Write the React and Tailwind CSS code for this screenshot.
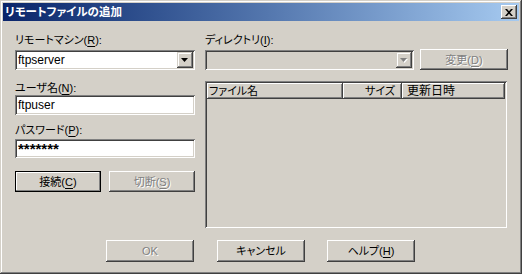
import React from "react";

const Arrow = ({ disabled }) => (
  <svg width="8" height="5" viewBox="0 0 8 5" className="block">
    {disabled && <polygon points="1,1 8,1 4.5,5" fill="#ffffff" />}
    <polygon points="0,0 7,0 3.5,4" fill={disabled ? "#808080" : "#000000"} />
  </svg>
);

const Combo = ({ value, disabled, className }) => (
  <div
    className={
      "h-[20px] flex items-stretch p-[2px] shadow-[inset_1px_1px_#808080,inset_-1px_-1px_#ffffff,inset_2px_2px_#404040,inset_-2px_-2px_#d4d0c8] " +
      (disabled ? "bg-[#d4d0c8] " : "bg-white ") +
      (className || "")
    }
  >
    <div className="flex-1 flex items-center pl-[1px] leading-[14px] text-[12px]">{value}</div>
    <div className="w-[16px] flex items-center justify-center bg-[#d4d0c8] shadow-[inset_-1px_-1px_#404040,inset_1px_1px_#d4d0c8,inset_-2px_-2px_#808080,inset_2px_2px_#ffffff]">
      <Arrow disabled={disabled} />
    </div>
  </div>
);

const Input = ({ value, className }) => (
  <div
    className={
      "bg-white flex items-center px-[3px] leading-[14px] shadow-[inset_1px_1px_#808080,inset_-1px_-1px_#ffffff,inset_2px_2px_#404040,inset_-2px_-2px_#d4d0c8] " +
      (className || "")
    }
  >
    {value}
  </div>
);

const Btn = ({ children, disabled, def, className }) => (
  <div
    className={
      "flex items-center justify-center leading-[14px] " +
      (def
        ? "shadow-[inset_0_0_0_1px_#000000,inset_-2px_-2px_#808080,inset_2px_2px_#ffffff] "
        : "shadow-[inset_-1px_-1px_#404040,inset_1px_1px_#ffffff,inset_-2px_-2px_#808080,inset_2px_2px_#d4d0c8] ") +
      (disabled ? "text-[#808080] [text-shadow:1px_1px_#ffffff] " : "text-black ") +
      (className || "")
    }
  >
    {children}
  </div>
);

const U = ({ children }) => <span className="underline underline-offset-[2px]">{children}</span>;

const HeaderCell = ({ children, className }) => (
  <div
    className={
      "h-full flex items-center leading-[14px] shadow-[inset_-1px_-1px_#404040,inset_1px_1px_#ffffff,inset_-2px_-2px_#808080] " +
      (className || "")
    }
  >
    {children}
  </div>
);

export default function App() {
  return (
    <div className="w-[522px] h-[274px] bg-[#d4d0c8] p-[3px] flex flex-col text-[11px] text-black font-['Liberation_Sans','Noto_Sans_CJK_JP',sans-serif] [font-feature-settings:'palt'] shadow-[inset_-1px_-1px_#404040,inset_1px_1px_#d4d0c8,inset_-2px_-2px_#808080,inset_2px_2px_#ffffff]">
      <div className="h-[18px] shrink-0 flex items-center pl-[2px] pr-[2px] bg-linear-to-r from-[#0a246a] to-[#a6caf0]">
        <span className="text-white font-bold text-[11.5px] leading-[14px]">リモートファイルの追加</span>
        <div className="ml-auto w-[16px] h-[14px] bg-[#d4d0c8] flex items-center justify-center shadow-[inset_-1px_-1px_#404040,inset_1px_1px_#ffffff,inset_-2px_-2px_#808080,inset_2px_2px_#d4d0c8]">
          <svg width="8" height="7" viewBox="0 0 8 7" className="block">
            <path d="M0 0h2l2 2.2L6 0h2L5 3.5 8 7H6L4 4.8 2 7H0l3-3.5z" fill="#000000" />
          </svg>
        </div>
      </div>

      <div className="flex flex-col px-[12px] pt-[12px]">
        <div className="flex gap-[10px]">
          <div className="w-[180px] flex flex-col">
            <div className="h-[17px] leading-[14px]">リモートマシン(<U>R</U>):</div>
            <Combo value="ftpserver" />
            <div className="h-[14px] mt-[11px] leading-[14px]">ユーザ名(<U>N</U>):</div>
            <Input value="ftpuser" className="h-[20px] text-[12px]" />
            <div className="h-[16px] mt-[8px] leading-[14px]">パスワード(<U>P</U>):</div>
            <Input value="*******" className="h-[19px] font-bold text-[15px]" />
            <div className="flex gap-[8px] mt-[13px]">
              <Btn def className="w-[87px] h-[21px]">
                接続(<U>C</U>)
              </Btn>
              <Btn disabled className="w-[87px] h-[21px]">
                切断(<U>S</U>)
              </Btn>
            </div>
          </div>

          <div className="w-[303px] flex flex-col">
            <div className="h-[17px] leading-[14px]">ディレクトリ(<U>I</U>):</div>
            <div className="flex items-start h-[20px]">
              <Combo value="" disabled className="w-[209px]" />
              <Btn disabled className="ml-[6px] -mt-[1px] w-[88px] h-[21px]">
                変更(<U>D</U>)
              </Btn>
            </div>
            <div className="mt-[11px] w-[302px] h-[147px] p-[2px] shadow-[inset_1px_1px_#808080,inset_-1px_-1px_#ffffff,inset_2px_2px_#404040,inset_-2px_-2px_#d4d0c8]">
              <div className="flex h-[16px]">
                <HeaderCell className="w-[136px] pl-[2px]">ファイル名</HeaderCell>
                <HeaderCell className="w-[59px] justify-end pr-[7px]">サイズ</HeaderCell>
                <HeaderCell className="w-[103px] pl-[5px] text-[12px]">更新日時</HeaderCell>
              </div>
            </div>
          </div>
        </div>

        <div className="flex mt-[12px] pl-[91px]">
          <Btn disabled className="w-[88px] h-[22px]">OK</Btn>
          <Btn className="ml-[23px] w-[88px] h-[22px]">キャンセル</Btn>
          <Btn className="ml-[22px] w-[88px] h-[22px]">
            ヘルプ(<U>H</U>)
          </Btn>
        </div>
      </div>
    </div>
  );
}
